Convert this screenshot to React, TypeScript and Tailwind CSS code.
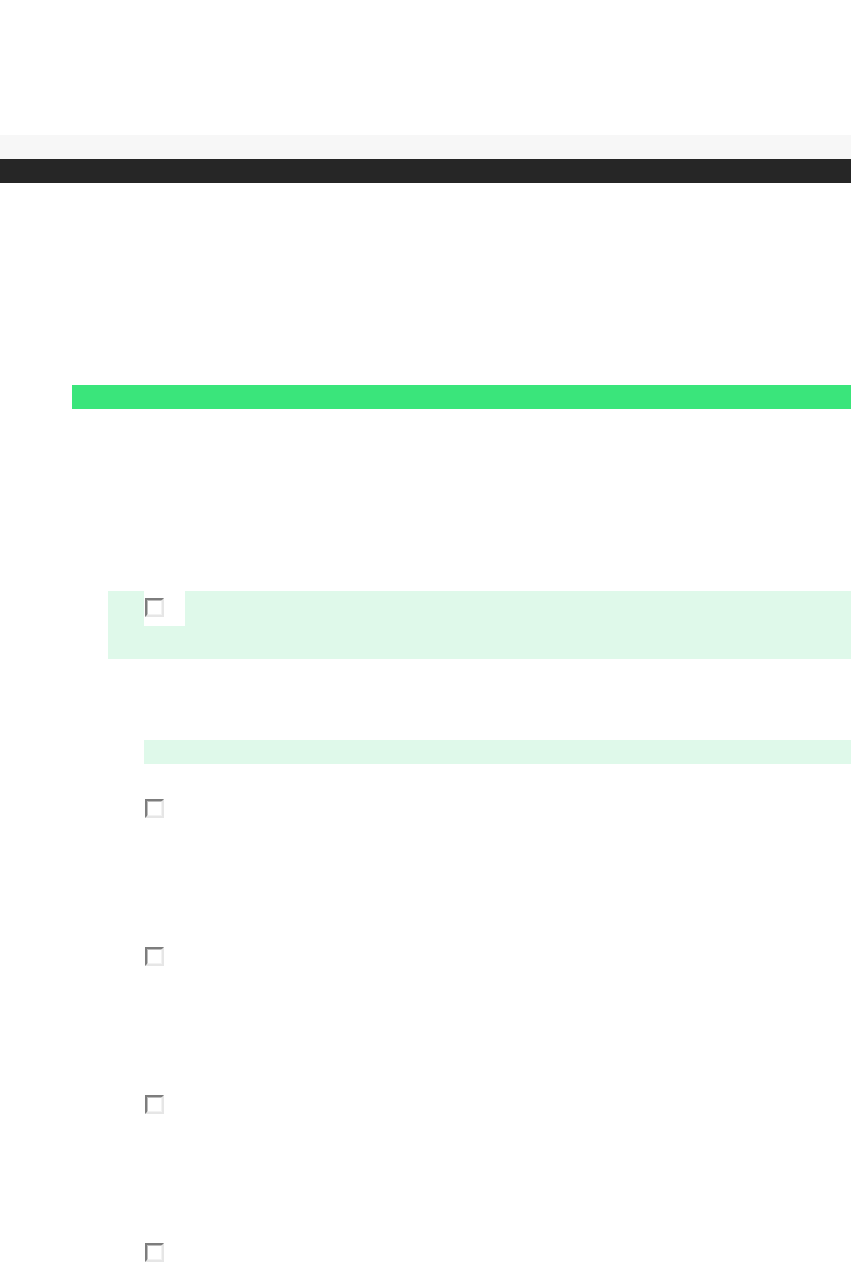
function Checkbox() {
  return (
    <div className="w-[19px] h-[19px] border-2 border-t-[#7d7d7d] border-l-[#7d7d7d] border-b-[#e6e6e6] border-r-[#e6e6e6] bg-white">
      <div className="w-full h-full border border-t-[#bdbdbd] border-l-[#bdbdbd] border-b-[#f2f2f2] border-r-[#f2f2f2]" />
    </div>
  );
}

export default function App() {
  return (
    <div className="min-h-screen bg-white pt-[135px]">
      <div className="h-6 bg-[#f7f7f7]" />
      <div className="h-6 bg-[#262626]" />

      <div className="mt-[202px] ml-[72px] h-6 bg-[#3ae57b]" />

      <div className="mt-[182px] ml-[108px] h-[68px] bg-[#dff9ea] pl-9">
        <div className="w-[41px] h-[35px] bg-white pt-[7px] pl-px">
          <Checkbox />
        </div>
      </div>

      <div className="mt-[81px] ml-[144px] h-6 bg-[#dff9ea]" />

      <div className="ml-[145px] pt-[35px] flex flex-col gap-[129px]">
        <Checkbox />
        <Checkbox />
        <Checkbox />
        <Checkbox />
      </div>
    </div>
  );
}
